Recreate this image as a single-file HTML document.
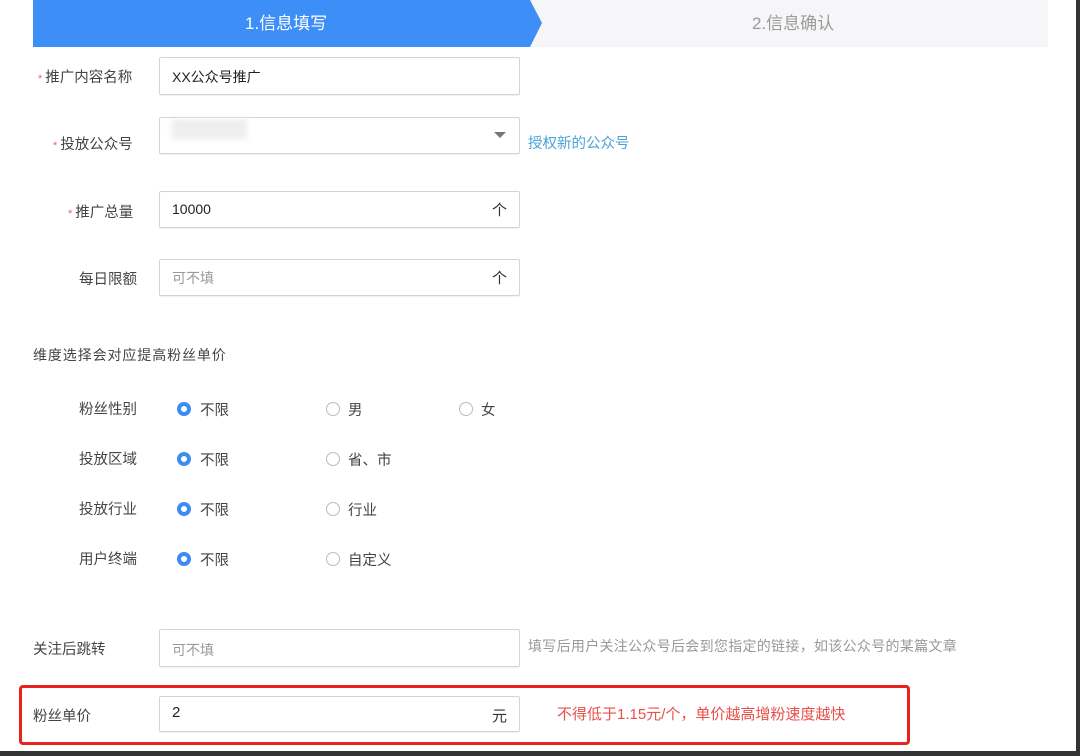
<!DOCTYPE html>
<html><head><meta charset="utf-8"><style>
body{margin:0;width:1080px;height:756px;background:#fff;position:relative;overflow:hidden;font-family:"Liberation Sans","Noto Sans CJK SC",sans-serif;font-size:14px;color:#333}
.a{position:absolute;white-space:nowrap}
.inp{position:absolute;left:159px;width:359px;border:1px solid #d4d4d4;border-radius:2px;background:#fff;box-shadow:0 1px 1px rgba(0,0,0,.06)}
.lbl{position:absolute;font-size:14.5px;color:#444}
.star{color:#e9636b;font-size:11px;margin-right:3px}
.r{position:absolute;width:14px;height:14px;border:1px solid #bbb;border-radius:50%;box-sizing:border-box;background:#fff}
.r.on{border:4px solid #3c8cf2;background:#fff}
.rt{position:absolute;font-size:14.5px;color:#444}
</style></head><body>
<div class="a" style="left:1076px;top:0;width:4px;height:756px;background:#333"></div>
<div class="a" style="left:0;top:751px;width:1080px;height:5px;background:#333"></div>
<div class="a" style="left:530px;top:0;width:518px;height:47px;background:#f6f6f8"></div>
<svg class="a" style="left:33px;top:0" width="512" height="48"><polygon points="0,0 497,0 509,23 497,47 0,47" fill="#3e8ef7"/></svg>
<div class="a" style="left:245px;top:9px;font-size:17px;color:#fff">1.信息填写</div>
<div class="a" style="left:752px;top:9px;font-size:17px;color:#9a9a9a">2.信息确认</div>

<div class="lbl" style="left:38px;top:66px"><span class="star">*</span>推广内容名称</div>
<div class="inp" style="top:57px;height:36px"><span class="a" style="left:12px;top:9px;color:#222">XX公众号推广</span></div>

<div class="lbl" style="left:53px;top:133px"><span class="star">*</span>投放公众号</div>
<div class="inp" style="top:117px;height:35px"><div class="a" style="left:12px;top:1px;width:75px;height:20px;background:#eee;filter:blur(3px)"></div><svg class="a" style="left:334px;top:14px" width="12" height="8"><polygon points="0,0 12,0 6,6" fill="#777"/></svg></div>
<div class="a" style="left:528px;top:132px;color:#4aa3d8;font-size:14.5px">授权新的公众号</div>

<div class="lbl" style="left:68px;top:201px"><span class="star">*</span>推广总量</div>
<div class="inp" style="top:191px;height:35px"><span class="a" style="left:12px;top:9px;color:#222">10000</span><span class="a" style="left:332px;top:7px;font-size:15px">个</span></div>

<div class="lbl" style="left:79px;top:268px">每日限额</div>
<div class="inp" style="top:259px;height:35px"><span class="a" style="left:12px;top:8px;color:#999">可不填</span><span class="a" style="left:332px;top:7px;font-size:15px">个</span></div>

<div class="lbl" style="left:33px;top:345px;font-size:14px;letter-spacing:.9px">维度选择会对应提高粉丝单价</div>

<div class="lbl" style="left:79px;top:398px">粉丝性别</div>
<div class="r on" style="left:177px;top:402px"></div><div class="rt" style="left:200px;top:399px">不限</div>
<div class="r" style="left:326px;top:402px"></div><div class="rt" style="left:348px;top:399px">男</div>
<div class="r" style="left:459px;top:402px"></div><div class="rt" style="left:481px;top:399px">女</div>

<div class="lbl" style="left:79px;top:448px">投放区域</div>
<div class="r on" style="left:177px;top:452px"></div><div class="rt" style="left:200px;top:449px">不限</div>
<div class="r" style="left:326px;top:452px"></div><div class="rt" style="left:348px;top:449px">省、市</div>

<div class="lbl" style="left:79px;top:498px">投放行业</div>
<div class="r on" style="left:177px;top:502px"></div><div class="rt" style="left:200px;top:499px">不限</div>
<div class="r" style="left:326px;top:502px"></div><div class="rt" style="left:348px;top:499px">行业</div>

<div class="lbl" style="left:79px;top:548px">用户终端</div>
<div class="r on" style="left:177px;top:552px"></div><div class="rt" style="left:200px;top:549px">不限</div>
<div class="r" style="left:326px;top:552px"></div><div class="rt" style="left:348px;top:549px">自定义</div>

<div class="lbl" style="left:33px;top:638px">关注后跳转</div>
<div class="inp" style="top:629px;height:36px"><span class="a" style="left:12px;top:10px;color:#999">可不填</span></div>
<div class="a" style="left:528px;top:636px;color:#999;font-size:14px;letter-spacing:.3px">填写后用户关注公众号后会到您指定的链接，如该公众号的某篇文章</div>

<div class="a" style="left:19px;top:685px;width:885px;height:54px;border:3px solid #e8231d;border-radius:4px"></div>
<div class="lbl" style="left:33px;top:705px">粉丝单价</div>
<div class="inp" style="top:696px;height:34px"><span class="a" style="left:12px;top:7px;color:#222;font-size:15px">2</span><span class="a" style="left:332px;top:8px;font-size:15px">元</span></div>
<div class="a" style="left:557px;top:703px;color:#e9504a;font-size:15px">不得低于1.15元/个，单价越高增粉速度越快</div>
</body></html>
